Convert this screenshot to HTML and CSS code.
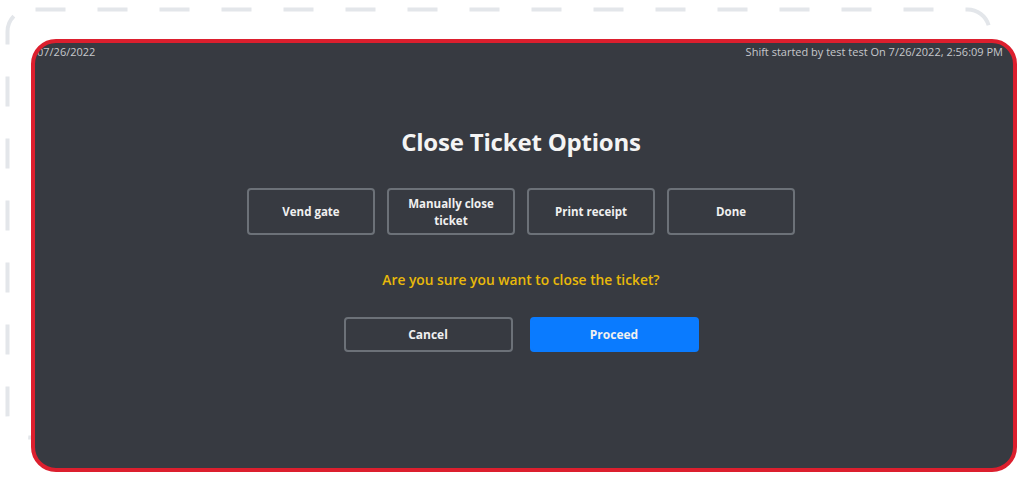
FILE: index.html
```html
<!DOCTYPE html>
<html lang="en">
<head>
<meta charset="utf-8">
<title>Close Ticket Options</title>
<link rel="stylesheet" href="styles.css">
</head>
<body>
<div class="page">
  <svg class="dashes" width="1024" height="480" viewBox="0 0 1024 480" aria-hidden="true">
    <rect x="7.5" y="9.5" width="982" height="428" rx="22" ry="22" fill="none" stroke="#e3e6ea" stroke-width="4" stroke-dasharray="30 32" stroke-dashoffset="-6"/>
  </svg>
  <div class="panel">
    <div class="header">
      <span class="date">07/26/2022</span>
      <span class="shift">Shift started by test test On 7/26/2022, 2:56:09 PM</span>
    </div>
    <div class="main">
      <h1 class="title">Close Ticket Options</h1>
      <div class="options">
        <button class="btn btn-outline opt">Vend gate</button>
        <button class="btn btn-outline opt">Manually close ticket</button>
        <button class="btn btn-outline opt">Print receipt</button>
        <button class="btn btn-outline opt">Done</button>
      </div>
      <p class="warning">Are you sure you want to close the ticket?</p>
      <div class="actions">
        <button class="btn btn-outline act">Cancel</button>
        <button class="btn btn-primary act">Proceed</button>
      </div>
    </div>
  </div>
</div>
</body>
</html>
```

FILE: styles.css
```css
html, body {
  margin: 0;
  padding: 0;
  background: #ffffff;
}

body {
  font-family: "Open Sans", "Noto Sans", "Liberation Sans", sans-serif;
}

.page {
  position: relative;
  width: 1024px;
  height: 480px;
  box-sizing: border-box;
  padding: 39px 7px 8px 31px;
}

.dashes {
  position: absolute;
  left: 0;
  top: 0;
  pointer-events: none;
}

.panel {
  position: relative;
  box-sizing: border-box;
  width: 986px;
  height: 433px;
  border: 4px solid #dc1f2e;
  border-radius: 25px;
  background: #373a41;
  overflow: hidden;
  display: flex;
  flex-direction: column;
}

.header {
  display: flex;
  justify-content: space-between;
  padding: 1px 10px 0 0;
  font-size: 11px;
  line-height: 15px;
  color: #c6c8cc;
}

.date {
  margin-left: 2px;
}

.main {
  display: flex;
  flex-direction: column;
  align-items: center;
  padding-right: 6px;
}

.title {
  margin: 67px 0 0;
  font-size: 24px;
  line-height: 32px;
  font-weight: 700;
  color: #f4f4f4;
  letter-spacing: -0.2px;
}

.options {
  display: flex;
  gap: 12px;
  margin-top: 30px;
}

.btn {
  box-sizing: border-box;
  font-family: inherit;
  font-weight: 700;
  color: #f0f0f0;
  border-radius: 4px;
  cursor: pointer;
  padding: 0 10px;
}

.btn-outline {
  background: transparent;
  border: 2px solid #6c7178;
}

.btn-primary {
  background: #0a7bff;
  border: 2px solid #0a7bff;
}

.opt {
  width: 128px;
  height: 47px;
  font-size: 11.5px;
  line-height: 17px;
  padding: 0 16px;
}

.warning {
  margin: 35px 0 0;
  font-size: 13.8px;
  line-height: 19px;
  font-weight: 600;
  color: #e8b90a;
}

.actions {
  display: flex;
  gap: 17px;
  margin-top: 28px;
}

.act {
  width: 169px;
  height: 35px;
  font-size: 12px;
}
```
